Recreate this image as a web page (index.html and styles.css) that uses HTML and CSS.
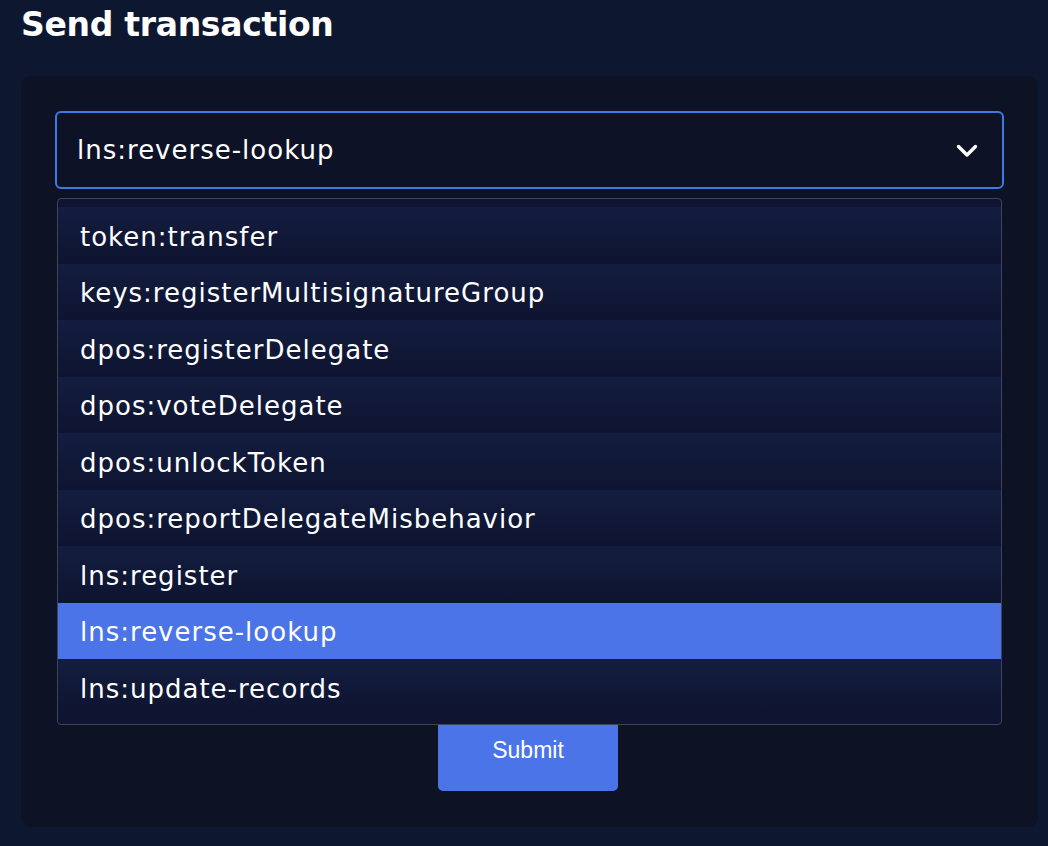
FILE: index.html
```html
<!DOCTYPE html>
<html lang="en">
<head>
<meta charset="utf-8">
<title>Send transaction</title>
<link rel="stylesheet" href="styles.css">
</head>
<body>
<h1 class="title">Send transaction</h1>
<section class="card">
  <div class="select-wrap">
    <div class="select">
      <span class="select-value">lns:reverse-lookup</span>
      <svg class="chevron" width="22" height="14" viewBox="0 0 22 14" aria-hidden="true">
        <path d="M2.5 2.5 L11 11 L19.5 2.5" fill="none" stroke="#ffffff" stroke-width="3.4" stroke-linecap="round" stroke-linejoin="round"/>
      </svg>
    </div>
    <ul class="listbox">
      <li class="option">token:transfer</li>
      <li class="option">keys:registerMultisignatureGroup</li>
      <li class="option">dpos:registerDelegate</li>
      <li class="option">dpos:voteDelegate</li>
      <li class="option">dpos:unlockToken</li>
      <li class="option">dpos:reportDelegateMisbehavior</li>
      <li class="option">lns:register</li>
      <li class="option active">lns:reverse-lookup</li>
      <li class="option">lns:update-records</li>
    </ul>
  </div>
  <div class="fields"></div>
  <div class="actions">
    <button class="submit" type="button">Submit</button>
  </div>
</section>
</body>
</html>
```

FILE: styles.css
```css
* { box-sizing: border-box; }

html, body {
  margin: 0;
  padding: 0;
  background: #0e1730;
  color: #ffffff;
  font-family: "DejaVu Sans", "Inter", sans-serif;
}

body {
  width: 1048px;
  height: 846px;
  overflow: hidden;
}

.title {
  margin: 0;
  padding: 4px 0 0 21px;
  height: 76px;
  font-size: 33px;
  font-weight: 700;
  line-height: 42px;
  letter-spacing: -0.3px;
}

.card {
  margin: 0 10px 0 21px;
  background: #0d1225;
  border-radius: 10px;
  padding: 35px 34px 36px 34px;
}

.select-wrap {
  position: relative;
}

.select {
  height: 78px;
  border: 2px solid #3c7be3;
  border-radius: 6px;
  background: #0d1227;
  display: flex;
  align-items: center;
  justify-content: space-between;
  padding: 0 24px 0 20px;
  font-size: 26px;
  letter-spacing: 1px;
}

.chevron {
  display: block;
  margin-top: 2px;
}

.listbox {
  position: absolute;
  z-index: 2;
  top: 87px;
  left: 2px;
  right: 2px;
  margin: 0;
  padding: 8px 0;
  list-style: none;
  border: 1px solid #3d4459;
  border-radius: 4px;
  background: #0f1530;
}

.option {
  height: 56.5px;
  display: flex;
  align-items: center;
  padding: 3px 0 0 22px;
  font-size: 26px;
  letter-spacing: 1px;
  background: linear-gradient(#131d3f, #0e1430);
}

.option.active {
  background: #4a74e8;
}

.fields {
  height: 520px;
}

.actions {
  display: flex;
  justify-content: center;
  padding-right: 3px;
}

.submit {
  width: 180px;
  height: 82px;
  border: none;
  border-radius: 5px;
  background: #4a74e8;
  color: #ffffff;
  font-family: "Liberation Sans", Arial, sans-serif;
  font-size: 23px;
  letter-spacing: 0;
  padding: 0;
}
```
